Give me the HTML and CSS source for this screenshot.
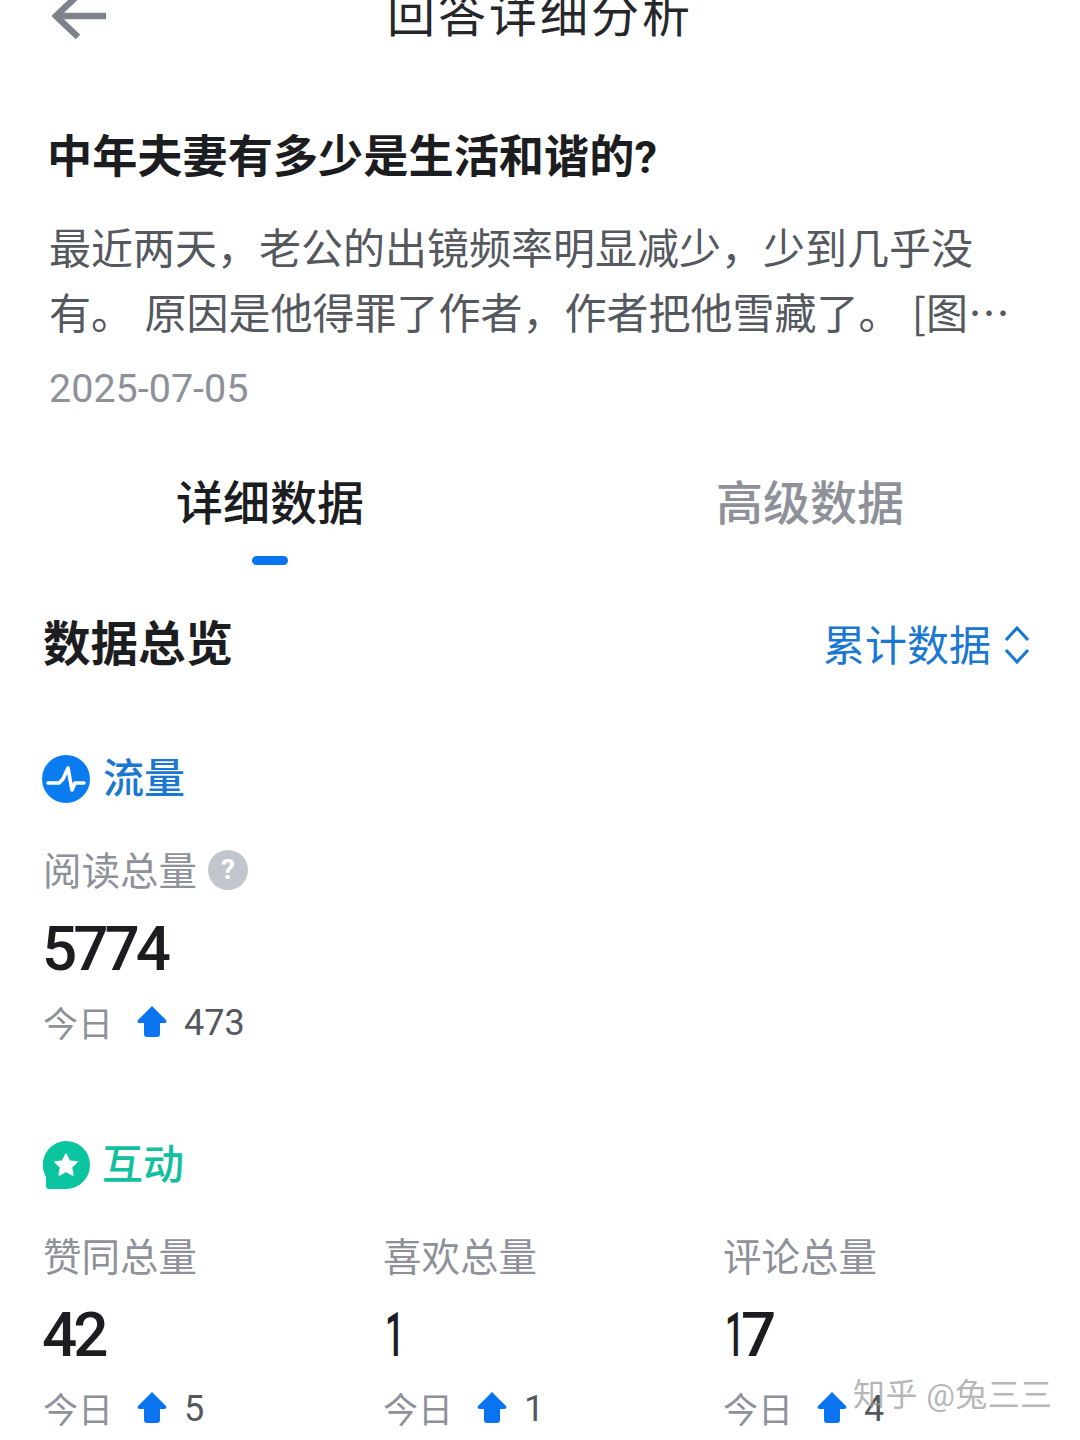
FILE: index.html
```html
<!DOCTYPE html>
<html lang="zh-CN">
<head>
<meta charset="utf-8">
<title>回答详细分析</title>
<link rel="stylesheet" href="styles.css">
</head>
<body>
<main class="page">
  <header class="topbar">
    <svg class="back" viewBox="0 0 54 50"><path d="M26 3 4 24l22 21M4 24h50" fill="none" stroke="#7d828c" stroke-width="6.5"/></svg>
    <h1 class="page-title">回答详细分析</h1>
  </header>

  <section class="question">
    <h2 class="q-title">中年夫妻有多少是生活和谐的?</h2>
    <p class="q-body">最近两天，老公的出镜频率明显减少，少到几乎没<br>有。 原因是他得罪了作者，作者把他雪藏了。 [图…</p>
    <div class="q-date">2025-07-05</div>
  </section>

  <nav class="tabs">
    <div class="tab active">详细数据<span class="tab-bar"></span></div>
    <div class="tab">高级数据</div>
  </nav>

  <div class="overview">
    <h3 class="overview-title">数据总览</h3>
    <div class="range"><span class="range-text">累计数据</span>
      <svg class="updown" viewBox="0 0 28 40"><path d="M3 15 14 3l11 12M3 25l11 12 11-12" fill="none" stroke="#1a78d2" stroke-width="3.2"/></svg>
    </div>
  </div>

  <section class="group flow">
    <div class="group-head">
      <svg class="group-icon" viewBox="0 0 48 48"><circle cx="24" cy="24" r="24" fill="#0a7cf0"/><path d="M6 28h11l4-4 5-11 4 22 3-7h9" fill="none" stroke="#fff" stroke-width="3.600" stroke-linejoin="round" stroke-linecap="round"/></svg>
      <span class="group-name blue">流量</span>
    </div>
    <div class="metric">
      <div class="label">阅读总量<span class="help">?</span></div>
      <div class="num">5774</div>
      <div class="today">今日<svg class="up" viewBox="0 0 30 32"><path d="M15 1 29 15c1 2 0 3-2 3h-4v11c0 2-1 3-3 3h-10c-2 0-3-1-3-3V18H3c-2 0-3-1-2-3Z" fill="#0a74f0"/></svg><span class="delta">473</span></div>
    </div>
  </section>

  <section class="group interact">
    <div class="group-head">
      <svg class="group-icon" viewBox="0 0 48 48"><path d="M24 0a24 24 0 0 1 0 48H7c-2 0-3-1-3-3v-9A24 24 0 0 1 24 0Z" fill="#0bc4a0"/><path d="m24 13 3.400 7 7.600 1-5.500 5.300 1.300 7.700-6.800-3.700-6.800 3.700 1.300-7.700-5.500-5.300 7.600-1Z" fill="#fff" stroke="#fff" stroke-width="1.500" stroke-linejoin="round"/></svg>
      <span class="group-name green">互动</span>
    </div>
    <div class="metrics">
      <div class="metric">
        <div class="label">赞同总量</div>
        <div class="num">42</div>
        <div class="today">今日<svg class="up" viewBox="0 0 30 32"><path d="M15 1 29 15c1 2 0 3-2 3h-4v11c0 2-1 3-3 3h-10c-2 0-3-1-3-3V18H3c-2 0-3-1-2-3Z" fill="#0a74f0"/></svg><span class="delta">5</span></div>
      </div>
      <div class="metric">
        <div class="label">喜欢总量</div>
        <div class="num"><span class="one">1</span></div>
        <div class="today">今日<svg class="up" viewBox="0 0 30 32"><path d="M15 1 29 15c1 2 0 3-2 3h-4v11c0 2-1 3-3 3h-10c-2 0-3-1-3-3V18H3c-2 0-3-1-2-3Z" fill="#0a74f0"/></svg><span class="delta">1</span></div>
      </div>
      <div class="metric">
        <div class="label">评论总量</div>
        <div class="num"><span class="one">1</span>7</div>
        <div class="today">今日<svg class="up" viewBox="0 0 30 32"><path d="M15 1 29 15c1 2 0 3-2 3h-4v11c0 2-1 3-3 3h-10c-2 0-3-1-3-3V18H3c-2 0-3-1-2-3Z" fill="#0a74f0"/></svg><span class="delta">4</span></div>
      </div>
    </div>
  </section>

  <div class="watermark">知乎 @兔三三</div>
</main>
</body>
</html>
```
FILE: styles.css
```css
* { box-sizing: border-box; }
html, body { margin: 0; padding: 0; background: #fff; }
body { width: 1080px; height: 1440px; overflow: hidden; }
.page {
  position: relative;
  width: 1080px;
  height: 1440px;
  overflow: hidden;
  font-family: Roboto, "Noto Sans CJK SC", sans-serif;
  color: #1c1d21;
}
h1, h2, h3, p { margin: 0; font-weight: normal; }

.topbar {
  position: relative;
  height: 64px;
  margin-top: -16px;
  display: flex;
  align-items: center;
  justify-content: center;
}
.back { position: absolute; left: 52px; top: 8px; width: 54px; height: 50px; }
.page-title { font-size: 48px; letter-spacing: 3px; line-height: 64px; color: #26272b; }

.question { padding: 0 49px; margin-top: 78px; }
.q-title { margin-left: -2px; font-size: 45.200px; line-height: 64px; font-weight: 700; color: #1c1d21; }
.q-body { margin-top: 23px; font-family: "Noto Sans CJK SC", sans-serif; font-size: 42px; word-spacing: 2px; line-height: 65px; color: #55585f; }
.q-date { margin-top: 21px; font-size: 39.500px; line-height: 50px; color: #8e9199; }

.tabs { display: grid; grid-template-columns: 540px 540px; margin-top: 55px; }
.tab { position: relative; text-align: center; font-size: 47px; font-weight: 500; line-height: 70px; color: #8e9199; height: 96px; }
.tab.active { color: #1c1d21; }
.tab-bar {
  position: absolute;
  left: 252px;
  top: 87px;
  width: 36px;
  height: 9px;
  border-radius: 5px;
  background: #0a74f0;
}

.overview {
  display: flex;
  justify-content: space-between;
  align-items: center;
  height: 70px;
  margin-top: 45px;
  padding: 0 49px 0 43px;
}
.overview-title { font-size: 47.500px; font-weight: 700; line-height: 70px; }
.range { display: flex; align-items: center; gap: 12px; font-size: 42px; color: #1a78d2; }
.range-text { margin-bottom: 5px; }
.updown { width: 28px; height: 40px; }

.group { padding-left: 42px; }
.flow { margin-top: 75px; }
.interact { margin-top: 98px; }
.group-head { display: flex; align-items: center; height: 48px; }
.group-icon { width: 48px; height: 48px; }
.group-name { margin-left: 13px; font-size: 41px; font-weight: 500; line-height: 48px; }
.blue { color: #1a78d2; }
.green { color: #12c0a0; margin-left: 12px; }

.metrics { display: grid; grid-template-columns: repeat(3, 340px); }
.metric { padding-left: 1px; }
.label {
  display: flex;
  align-items: center;
  height: 44px;
  margin-top: 43px;
  font-size: 38.500px;
  color: #8e9199;
}
.help {
  width: 40px;
  height: 40px;
  margin: 4px 0 0 11px;
  border-radius: 50%;
  background: #c1c5cd;
  color: #fff;
  font-size: 28px;
  font-weight: 700;
  line-height: 40px;
  text-align: center;
}
.num {
  height: 80px;
  margin: 19px 0 0 -1px;
  font-size: 62px;
  font-weight: 500;
  letter-spacing: -4px;
  line-height: 80px;
  color: #1c1d21;
}
.one {
  display: inline-block;
  width: 16px;
  margin-left: 3px;
  transform: scaleX(0.55);
  transform-origin: left center;
}
.today {
  display: flex;
  align-items: center;
  height: 44px;
  margin-top: 10px;
  font-size: 35px;
  color: #8e9199;
}
.up { width: 30px; height: 32px; margin-left: 24px; }
.delta { margin: 4px 0 0 17px; font-size: 36px; color: #55585f; }

.watermark {
  position: absolute;
  left: 853px;
  top: 1375px;
  font-size: 32px;
  letter-spacing: 0.400px;
  line-height: 40px;
  white-space: nowrap;
  color: rgba(150, 150, 150, 0.7);
}
```
